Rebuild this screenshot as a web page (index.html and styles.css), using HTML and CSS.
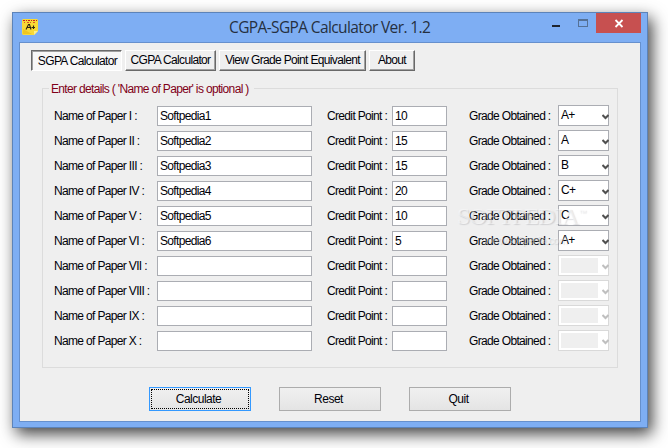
FILE: index.html
```html
<!DOCTYPE html>
<html lang="en">
<head>
<meta charset="utf-8">
<title>CGPA-SGPA Calculator Ver. 1.2</title>
<link rel="stylesheet" href="styles.css">
</head>
<body>
<div class="window">
  <header class="titlebar">
    <svg class="app-icon" width="16" height="16" viewBox="0 0 16 16">
      <path d="M1 0H15L16 1V12L12 16H1L0 15V1Z" fill="#f8d936"/>
      <path d="M1 10L10 15H1Z" fill="#efc51f"/>
      <path d="M12 16V12H16Z" fill="#fff08a"/>
      <path d="M1 1.5H15" stroke="#c8201c" stroke-dasharray="2 1 1 1"/>
      <path d="M2 3.5H14" stroke="#d8502a" stroke-dasharray="1 2 2 1"/>
      <path d="M4 10.5L6.5 5.5H7.5L9 10.5M5 8.5H9M9.5 8.5H13M11.5 6.5V10" fill="none" stroke="#2b2410" stroke-width="1.1"/>
    </svg>
    <h1 class="title">CGPA-SGPA Calculator Ver. 1.2</h1>
    <div class="controls">
      <svg width="90" height="20" viewBox="0 0 90 20" shape-rendering="crispEdges">
        <rect x="45" width="45" height="20" fill="#c75050"/>
        <rect x="1" y="12" width="8" height="2" fill="#1e242e"/>
        <path d="M27 6H37V14H27ZM28 8V13H36V8Z" fill="#557196" fill-rule="evenodd"/>
        <path d="M64.5 7L71.5 14M71.5 7L64.5 14" stroke="#fff" stroke-width="1.8" shape-rendering="auto"/>
      </svg>
    </div>
  </header>
  <main class="client">
    <nav class="tabs">
      <button class="tab tab-1 active">SGPA Calculator</button>
      <button class="tab tab-2">CGPA Calculator</button>
      <button class="tab tab-3">View Grade Point Equivalent</button>
      <button class="tab tab-4">About</button>
    </nav>
    <section class="group">
      <h2 class="legend">Enter details ( 'Name of Paper' is optional )</h2>
      <div class="watermark">SOFTPEDIA<sup>™</sup></div>
      <div class="watermark-url">www.softpedia.com</div>
      <div class="rows">
        <div class="row"><span class="name">Name of Paper I :</span><div class="field">Softpedia1</div><span class="credit">Credit Point :</span><div class="field">10</div><span class="grade">Grade Obtained :</span><div class="combo"><span>A+</span><svg class="arrow" viewBox="0 0 7 6"><path d="M0.5 1L3.5 4L6.5 1"/></svg></div></div>
        <div class="row"><span class="name">Name of Paper II :</span><div class="field">Softpedia2</div><span class="credit">Credit Point :</span><div class="field">15</div><span class="grade">Grade Obtained :</span><div class="combo"><span>A</span><svg class="arrow" viewBox="0 0 7 6"><path d="M0.5 1L3.5 4L6.5 1"/></svg></div></div>
        <div class="row"><span class="name">Name of Paper III :</span><div class="field">Softpedia3</div><span class="credit">Credit Point :</span><div class="field">15</div><span class="grade">Grade Obtained :</span><div class="combo"><span>B</span><svg class="arrow" viewBox="0 0 7 6"><path d="M0.5 1L3.5 4L6.5 1"/></svg></div></div>
        <div class="row"><span class="name">Name of Paper IV :</span><div class="field">Softpedia4</div><span class="credit">Credit Point :</span><div class="field">20</div><span class="grade">Grade Obtained :</span><div class="combo"><span>C+</span><svg class="arrow" viewBox="0 0 7 6"><path d="M0.5 1L3.5 4L6.5 1"/></svg></div></div>
        <div class="row"><span class="name">Name of Paper V :</span><div class="field">Softpedia5</div><span class="credit">Credit Point :</span><div class="field">10</div><span class="grade">Grade Obtained :</span><div class="combo"><span>C</span><svg class="arrow" viewBox="0 0 7 6"><path d="M0.5 1L3.5 4L6.5 1"/></svg></div></div>
        <div class="row"><span class="name">Name of Paper VI :</span><div class="field">Softpedia6</div><span class="credit">Credit Point :</span><div class="field">5</div><span class="grade">Grade Obtained :</span><div class="combo"><span>A+</span><svg class="arrow" viewBox="0 0 7 6"><path d="M0.5 1L3.5 4L6.5 1"/></svg></div></div>
        <div class="row"><span class="name">Name of Paper VII :</span><div class="field"></div><span class="credit">Credit Point :</span><div class="field"></div><span class="grade">Grade Obtained :</span><div class="combo disabled"><span></span><svg class="arrow" viewBox="0 0 7 6"><path d="M0.5 1L3.5 4L6.5 1"/></svg></div></div>
        <div class="row"><span class="name">Name of Paper VIII :</span><div class="field"></div><span class="credit">Credit Point :</span><div class="field"></div><span class="grade">Grade Obtained :</span><div class="combo disabled"><span></span><svg class="arrow" viewBox="0 0 7 6"><path d="M0.5 1L3.5 4L6.5 1"/></svg></div></div>
        <div class="row"><span class="name">Name of Paper IX :</span><div class="field"></div><span class="credit">Credit Point :</span><div class="field"></div><span class="grade">Grade Obtained :</span><div class="combo disabled"><span></span><svg class="arrow" viewBox="0 0 7 6"><path d="M0.5 1L3.5 4L6.5 1"/></svg></div></div>
        <div class="row"><span class="name">Name of Paper X :</span><div class="field"></div><span class="credit">Credit Point :</span><div class="field"></div><span class="grade">Grade Obtained :</span><div class="combo disabled"><span></span><svg class="arrow" viewBox="0 0 7 6"><path d="M0.5 1L3.5 4L6.5 1"/></svg></div></div>
      </div>
    </section>
    <footer class="actions">
      <button class="action focused">Calculate</button>
      <button class="action">Reset</button>
      <button class="action">Quit</button>
    </footer>
  </main>
</div>
</body>
</html>
```
FILE: styles.css
```css
* { box-sizing: border-box; }
body {
  margin: 0;
  padding: 12px;
  width: 668px;
  height: 448px;
  overflow: hidden;
  background: #fff;
  color: #000008;
  font: 12px/14px "Liberation Sans", Arial, sans-serif;
  letter-spacing: -0.66px;
}
.window {
  width: 636px;
  height: 416px;
  padding: 0 6px 6px;
  border: 1px solid #5c83b9;
  background: #7eaef3;
  box-shadow: 4px 6px 15px rgba(0, 0, 0, .75);
}
.titlebar {
  display: flex;
  align-items: flex-start;
  height: 29px;
  padding-left: 3px;
}
.app-icon { margin-top: 6px; }
.title {
  flex: 1;
  margin: 3px 0 0 104px;
  padding-left: 87px;
  font: 400 15.5px/22px "Open Sans", "Noto Sans", sans-serif;
  letter-spacing: -0.62px;
  color: #25303f;
  white-space: nowrap;
}
.controls { width: 90px; height: 20px; }
.controls svg { display: block; }
.client {
  height: 380px;
  padding: 7px 22px 0 11px;
  border: 1px solid #6690cd;
  background: #efefef;
}
.tabs { display: flex; gap: 3px; height: 21px; }
.tab {
  height: 21px;
  padding: 0 0 2px;
  border: 1px solid;
  border-color: #fff #696969 #696969 #fff;
  box-shadow: inset -1px -1px #a0a0a0;
  background: #efefef;
  color: inherit;
  font: inherit;
  letter-spacing: inherit;
  white-space: nowrap;
}
.tab-1 { width: 91px; }
.tab-2 { width: 91px; }
.tab-3 { width: 147px; }
.tab-4 { width: 46px; }
.tab.active {
  padding: 1px 0 0 2px;
  border-color: #696969 #fff #fff #696969;
  box-shadow: inset 1px 1px #a0a0a0;
  background: #f7f7f7;
}
.group {
  position: relative;
  width: 576px;
  height: 280px;
  margin: 17px 0 0 11px;
  padding: 16px 0 0 11px;
  border: 1px solid #dcdcdc;
}
.legend {
  position: absolute;
  left: 6px;
  top: -7px;
  margin: 0;
  padding: 0 5px 0 2px;
  background: #efefef;
  color: #800018;
  font: inherit;
  white-space: nowrap;
}
.rows { display: grid; gap: 4px; }
.row {
  display: grid;
  grid-template-columns: 103px 155px 15px 65px 55px 22px 89px 51px;
  height: 21px;
  align-items: end;
}
.row > span { position: relative; height: 17px; white-space: nowrap; }
.row > .credit { grid-column: 4; }
.row > .grade { grid-column: 7; }
.field {
  height: 20px;
  padding: 2px;
  border: 1px solid #abadb3;
  background: #fff;
}
.combo {
  display: flex;
  justify-content: space-between;
  height: 21px;
  padding: 2px 0 2px 2px;
  border: 1px solid #abadb3;
  background: #fff;
}
.combo span { position: relative; }
.arrow {
  width: 7px;
  height: 6px;
  margin: 6px -1px 0 0;
  fill: none;
  stroke: #505050;
  stroke-width: 2;
}
.combo.disabled { border-color: #d9d9d9; }
.disabled span { width: 37px; background: #efefef; }
.disabled .arrow { stroke: #bfbfbf; }
.watermark {
  position: absolute;
  left: 414px;
  top: 115px;
  color: rgba(255, 255, 255, .45);
  font: 24px/25px "Liberation Serif", serif;
  letter-spacing: -0.9px;
  text-shadow: 1px 1px 1px rgba(90, 90, 100, .2);
  white-space: nowrap;
}
.watermark sup { font: 8px/8px "Liberation Sans", sans-serif; vertical-align: 9px; }
.watermark-url {
  position: absolute;
  left: 441px;
  top: 144px;
  color: rgba(255, 255, 255, .4);
  font-size: 11px;
  letter-spacing: -0.7px;
  text-shadow: 1px 1px 1px rgba(90, 90, 100, .18);
}
.watermark, .watermark-url { z-index: 1; }
.actions { display: flex; gap: 28px; margin: 19px 0 0 118px; }
.action {
  width: 102px;
  height: 24px;
  padding: 0 3px 0 0;
  border: 1px solid #acacac;
  background: linear-gradient(#f0f0f0, #e4e4e4);
  color: inherit;
  font: inherit;
  letter-spacing: -0.5px;
}
.action.focused {
  border-color: #3399ff;
  outline: 1px dotted #000;
  outline-offset: -3px;
}
```
